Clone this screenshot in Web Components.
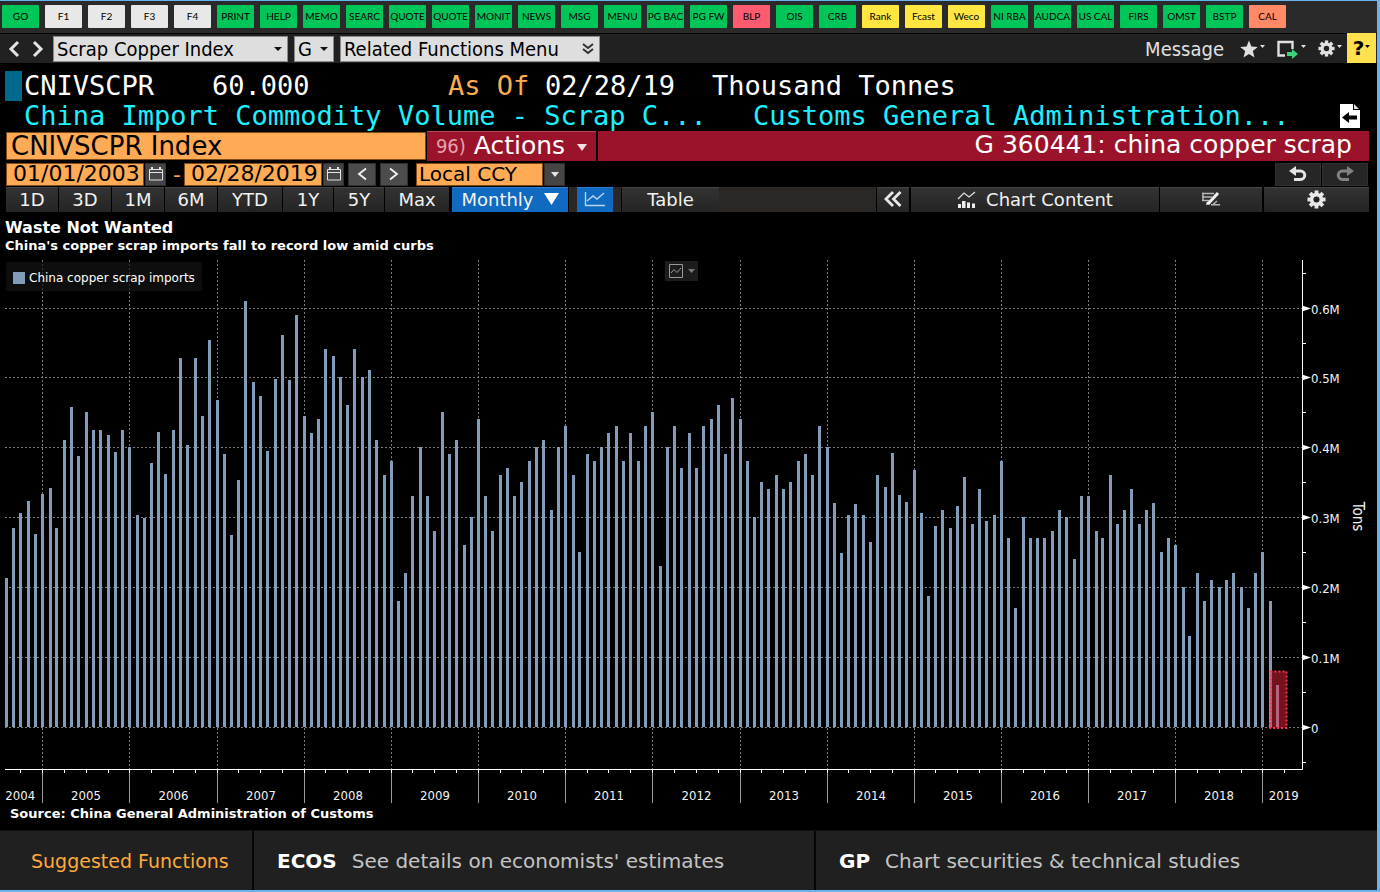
<!DOCTYPE html>
<html lang="en">
<head>
<meta charset="utf-8">
<title>CNIVSCPR Index - Scrap Copper Index</title>
<style>
  html, body { margin: 0; background: #000; }
  body { font-family: "DejaVu Sans", sans-serif; color: #fff; }
</style>
</head>
<body>
<terminal-window>
  <key-strip></key-strip>
  <nav-bar></nav-bar>
  <security-header></security-header>
  <title-bar></title-bar>
  <range-bar></range-bar>
  <chart-tabs></chart-tabs>
  <chart-panel>
    <span slot="title">Waste Not Wanted</span>
    <span slot="subtitle">China's copper scrap imports fall to record low amid curbs</span>
    <bar-chart label="China copper scrap imports" unit="Tons"></bar-chart>
    <span slot="source">Source: China General Administration of Customs</span>
  </chart-panel>
  <suggested-functions></suggested-functions>
</terminal-window>

<script>
const BASE = `
  :host, *, *::before, *::after { box-sizing: border-box; }
  button, input, select { font: inherit; color: inherit; margin: 0; padding: 0; border: 0; border-radius: 0; background: none; appearance: none; min-width: 0; }
  button { cursor: pointer; display: flex; align-items: center; justify-content: center; }
  svg { display: block; flex: none; }
  a { color: inherit; text-decoration: none; }
`;

const GEAR = (s, c) => `<svg width="${s}" height="${s}" viewBox="-10 -10 20 20" aria-hidden="true"><g fill="${c}">${
  [0, 45, 90, 135].map(a => `<rect x="-2" y="-9.5" width="4" height="19" transform="rotate(${a})"/>`).join('')
}</g><circle r="5" fill="none" stroke="${c}" stroke-width="4"/><circle r="3.2" fill="#222"/></svg>`;
const CARET = (w, h, c) => `<svg width="${w}" height="${h}" viewBox="0 0 10 6" preserveAspectRatio="none" aria-hidden="true"><path d="M0 0H10L5 6Z" fill="${c}"/></svg>`;

function define(tag, css, html) {
  const template = document.createElement('template');
  template.innerHTML = `<style>${BASE}${css}</style>${html}`;
  customElements.define(tag, class extends HTMLElement {
    constructor() {
      super();
      this.attachShadow({ mode: 'open' }).append(template.content.cloneNode(true));
    }
  });
}

define('terminal-window', `
  :host { display: flex; flex-direction: column; min-height: 100vh;
    border: solid #68b4ee; border-width: 1px 3px 2px 0; background: #000; }
`, `<slot></slot>`);

/* Programmable key strip */
const KEYS = [
  ['green', 'GO'], ['plain', 'F1 F2 F3 F4'], ['green', 'PRINT HELP MEMO SEARC QUOTE QUOTE MONIT NEWS MSG MENU PG_BAC PG_FW'],
  ['red', 'BLP'], ['green', 'OIS CRB'], ['yellow', 'Rank Fcast Weco'],
  ['green', 'NI_RBA AUDCA US_CAL FIRS OMST BSTP'], ['coral', 'CAL'],
].flatMap(([kind, names]) => names.split(' ').map(n => `<button class="${kind}"><span>${n.replace('_', ' ')}</span></button>`)).join('');

define('key-strip', `
  :host { display: flex; gap: 6px; height: 33px; padding: 4px 2px; background: #2a2a2a; border-bottom: 1px solid #000; overflow: hidden; }
  button { flex: none; width: 37px; height: 23px; border-radius: 1px; color: #000; font: 10px/23px Lato, sans-serif; }
  span { white-space: nowrap; }
  .green { background: #00c65a; } .plain { background: #e8e8e8; } .red { background: #ff5b70; }
  .yellow { background: #ffe640; } .coral { background: #ff8a65; }
`, KEYS);

/* Navigation bar */
define('nav-bar', `
  :host { display: flex; align-items: center; height: 29px; padding-left: 7px; background: #212121;
    font-family: "DejaVu Sans Condensed", "DejaVu Sans", sans-serif; font-size: 20px; color: #e0e0e0; }
  .arrows { display: flex; gap: 10px; width: 46px; }
  .box { position: relative; display: flex; height: 26px; margin-right: 6px; background: #dedede; border: 1px solid #8a8a8a; color: #000; align-items: center; }
  .box svg { position: absolute; right: 5px; pointer-events: none; }
  .box select, .box button { width: 100%; height: 24px; padding-left: 3px; line-height: 24px; justify-content: flex-start; white-space: nowrap; }
  .index { width: 235px; } .kind { width: 40px; } .menu { width: 260px; }
  .tools { display: flex; align-items: center; margin-left: auto; height: 30px; }
  .tools button { gap: 2px; margin-left: 12px; }
  .tools button .c { margin-bottom: 4px; }
  .tools .msg { margin-right: 4px; }
  .tools .help { width: 29px; height: 30px; margin: -1px 1px 0 5px; background: #ffe04d; color: #000; font: bold 20px "DejaVu Sans", sans-serif; gap: 1px; }
`, `
  <div class="arrows">
    <button aria-label="Back"><svg width="14" height="18" viewBox="0 0 14 18"><path d="M11 2L4 9L11 16" fill="none" stroke="#e4e4e4" stroke-width="3"/></svg></button>
    <button aria-label="Forward"><svg width="14" height="18" viewBox="0 0 14 18"><path d="M3 2L10 9L3 16" fill="none" stroke="#e4e4e4" stroke-width="3"/></svg></button>
  </div>
  <div class="box index"><select aria-label="Security"><option>Scrap Copper Index</option></select>${CARET(8, 4, '#111')}</div>
  <div class="box kind"><select aria-label="Function"><option>G</option></select>${CARET(8, 4, '#111')}</div>
  <div class="box menu"><button>Related Functions Menu</button>
    <svg width="12" height="12" viewBox="0 0 12 12"><path d="M1 1L6 5L11 1M1 6L6 10L11 6" fill="none" stroke="#333" stroke-width="2"/></svg></div>
  <div class="tools">
    <button class="msg">Message</button>
    <button aria-label="Favorites"><svg width="18" height="18" viewBox="0 0 18 18"><path d="M9 0.5L11.4 6.6L17.8 7L12.8 11.1L14.5 17.5L9 14L3.5 17.5L5.2 11.1L0.2 7L6.6 6.6Z" fill="#e0e0e0"/></svg><span class="c">${CARET(5, 3, '#e0e0e0')}</span></button>
    <button aria-label="Export"><svg width="22" height="20" viewBox="0 0 22 20"><path d="M8 16.500H1.500V3H15.500V10" fill="none" stroke="#e0e0e0" stroke-width="2.4"/><path d="M10 13H15V10L21 15L15 20V17H10Z" fill="#3fd27c"/></svg><span class="c">${CARET(5, 3, '#e0e0e0')}</span></button>
    <button aria-label="Settings">${GEAR(17, '#e0e0e0')}<span class="c">${CARET(5, 3, '#e0e0e0')}</span></button>
    <button class="help" aria-label="Help">?<span class="c">${CARET(5, 3, '#000')}</span></button>
  </div>
`);

/* Security headline */
define('security-header', `
  :host { display: grid; grid-template-columns: 19px 1fr 37px; padding: 8px 0 0 5px; font: 27px/30px "DejaVu Sans Mono", monospace; white-space: pre; }
  .cursor { width: 17px; height: 30px; background: #006a8c; }
  .row { display: grid; grid-template-columns: 188px 236px 97px 167px auto; }
  .desc { display: grid; grid-template-columns: 729px auto; grid-column: 2; color: #1ff0ff; }
  .row, .desc { justify-content: start; overflow: hidden; }
  .amber { color: #ffae4d; }
  button { grid-column: 3; grid-row: 2; justify-content: flex-start; }
`, `
  <div class="cursor"></div>
  <div class="row"><span>CNIVSCPR</span><span>60.000</span><span class="amber">As Of</span><span>02/28/19</span><span>Thousand Tonnes</span></div>
  <div class="desc"><span>China Import Commodity Volume - Scrap C...</span><span>Customs General Administration...</span></div>
  <button aria-label="Previous page"><svg width="20" height="24" viewBox="0 0 20 24"><path d="M0 0H13V6H20V24H0Z" fill="#fff"/><path d="M14 0L19 5H14Z" fill="#ddd"/><path d="M2 13.5L9 8V11.5H17V15.5H9V19Z" fill="#000"/></svg></button>
`);

/* Title row */
define('title-bar', `
  :host { display: flex; gap: 1px; height: 30px; padding: 0 8px 0 6px; font-size: 25px; }
  input { width: 420px; height: 28px; margin-top: 1px; padding-left: 4px; background: #ffaa55; border: 1px solid #7d4a18; color: #000; font-size: 26px; }
  button { width: 169px; margin-right: 1px; padding-bottom: 2px; background: #9b132b; border-top: 1px solid #b8455a; gap: 8px; }
  button .n { font: 20px "Liberation Sans Narrow", "DejaVu Sans Condensed", sans-serif; color: #e6a3ad; }
  button svg { margin: 4px 0 0 4px; }
  h1 { flex: 1; margin: 0; padding-right: 17px; background: #9b132b; font: inherit; line-height: 28px; text-align: right; white-space: nowrap; }
`, `
  <input type="text" aria-label="Index" value="CNIVSCPR Index">
  <button><span class="n">96)</span><span>Actions</span>${CARET(10, 7, '#f0dfe2')}</button>
  <h1>G 360441: china copper scrap</h1>
`);

/* Date range row */
const CAL = `<svg width="14" height="14" viewBox="0 0 14 14" aria-hidden="true"><path d="M0.5 2.5H13.5V13H0.5ZM0.5 5.5H13.5" fill="none" stroke="#e4e4e4"/><path d="M3 0V3M11 0V3" stroke="#e4e4e4" stroke-width="2"/></svg>`;
define('range-bar', `
  :host { display: flex; align-items: center; height: 26px; padding: 0 9px 0 6px; font-size: 22px; }
  input, select { height: 23px; background: #ffaa55; border: 1px solid #7d4a18; color: #000; }
  input { width: 138px; padding: 0 4px 2px 6px; }
  select { width: 127px; margin-left: 8px; padding: 0 2px; font-size: 20px; line-height: 20px; }
  button { width: 21px; height: 23px; margin-left: 1px; background: #454545; border: 1px solid #303030; }
  .dash { width: 18px; text-align: center; font-size: 22px; color: #ff9a45; padding-left: 4px; }
  .step { width: 28px; margin-left: 4px; background: #4c4c4c; }
  .undo { width: 46px; background: #262626; }
  .first { margin-left: auto; }
`, `
  <input type="text" aria-label="Start date" value="01/01/2003"><button aria-label="Pick start date">${CAL}</button>
  <span class="dash">-</span>
  <input type="text" aria-label="End date" value="02/28/2019"><button aria-label="Pick end date">${CAL}</button>
  <button class="step" aria-label="Earlier"><svg width="10" height="14" viewBox="0 0 10 14"><path d="M9 1.500L2 7L9 12.500" fill="none" stroke="#f4f4f4" stroke-width="1.800"/></svg></button>
  <button class="step" aria-label="Later"><svg width="10" height="14" viewBox="0 0 10 14"><path d="M1 1.500L8 7L1 12.500" fill="none" stroke="#f4f4f4" stroke-width="1.800"/></svg></button>
  <select aria-label="Currency"><option>Local CCY</option></select><button aria-label="Choose currency">${CARET(8, 5, '#e4e4e4')}</button>
  <button class="undo first" aria-label="Undo"><svg width="20" height="16" viewBox="0 0 20 16"><path d="M1 5L8 0V10Z" fill="#e4e4e4"/><path d="M6 5H12.5A4.2 4.2 0 0 1 12.5 13.5H6" fill="none" stroke="#e4e4e4" stroke-width="3"/></svg></button>
  <button class="undo" aria-label="Redo"><svg width="20" height="16" viewBox="0 0 20 16"><path d="M19 5L12 0V10Z" fill="#828282"/><path d="M14 5H7.5A4.2 4.2 0 0 0 7.5 13.5H14" fill="none" stroke="#828282" stroke-width="3"/></svg></button>
`);

/* Period and chart tabs */
define('chart-tabs', `
  :host { display: flex; gap: 1px; height: 26px; padding: 0 8px 0 6px; font-size: 18px; color: #f2f2f2; }
  button { flex: none; width: 52px; height: 25px; padding-bottom: 2px; background: linear-gradient(#333, #242424); border-top: 1px solid #444; }
  .n { width: 50px; } .w { width: 64px; }
  .on { background: #106abf; border-color: #2b7fce; }
  .period { width: 116px; margin-left: 2px; gap: 10px; }
  .rest { flex: 1; display: flex; height: 25px; gap: 8px; padding-left: 8px; background: #2b2724; }
  .line { width: 36px; } .table { width: 98px; border-left: 1px solid #000; }
  .back { width: 32px; } .content { width: 248px; gap: 10px; margin-left: 1px; } .edit { width: 102px; } .gear { width: 105px; margin-left: 1px; }
`, `
  <button>1D</button><button>3D</button><button>1M</button><button>6M</button><button class="w">YTD</button><button class="n">1Y</button><button class="n">5Y</button><button class="w">Max</button>
  <button class="on period"><span>Monthly</span>${CARET(15, 12, '#fff')}</button>
  <div class="rest">
    <button class="on line" aria-label="Line chart"><svg width="22" height="16" viewBox="0 0 22 16"><path d="M1.5 1V14.5H21M3 10L9 5L13 8L20 2" fill="none" stroke="#b9d4ee" stroke-width="1.4"/></svg></button>
    <button class="table">Table</button>
  </div>
  <button class="back" aria-label="Collapse"><svg width="18" height="16" viewBox="0 0 18 16"><path d="M9 1L2 8L9 15M16.500 1L9.500 8L16.500 15" fill="none" stroke="#e8e8e8" stroke-width="2.8"/></svg></button>
  <button class="content"><svg width="19" height="17" viewBox="0 0 19 17"><path d="M1 8L7 2L12 6L18 1" fill="none" stroke="#ddd" stroke-width="1.300"/><path d="M1 17V13H4V17ZM5 17V10H8.500V17ZM10 17V11.500H13V17ZM15 17V12.500H18V17Z" fill="#eee"/></svg><span>Chart Content</span></button>
  <button class="edit" aria-label="Annotate"><svg width="18" height="14" viewBox="0 0 18 14"><path d="M0 1.500H12M0 5H10M0 8.500H8M1 0.500V9" stroke="#b5b5b5" stroke-width="1.500"/><path d="M16 1L6 12" stroke="#f0f0f0" stroke-width="3"/><path d="M4 13L5 9.500L8 12Z" fill="#fff"/><path d="M9 12.700H18M15 9L11 12.500" stroke="#b5b5b5" stroke-width="1.500"/></svg></button>
  <button class="gear" aria-label="Chart settings">${GEAR(19, '#e8e8e8')}</button>
`);

/* Chart panel with headings and source line */
define('chart-panel', `
  :host { display: flex; flex-direction: column; flex: 1; padding: 5px 0 7px; font-weight: bold; font-size: 13px; }
  header { padding-left: 5px; }
  h2 { margin: 0; font-size: 16px; line-height: 20px; }
  p { margin: 0; line-height: 16px; }
  .chart { flex: 1; display: flex; padding-top: 6px; font-weight: normal; }
  footer { padding-left: 10px; line-height: 18px; }
`, `
  <header><h2><slot name="title"></slot></h2><p><slot name="subtitle"></slot></p></header>
  <div class="chart"><slot></slot></div>
  <footer><slot name="source"></slot></footer>
`);

/* Monthly import volumes in thousand tons, July 2004 to February 2019 */
const VOLUMES = [
  213,284,306,324,276,334,
  342,285,410,458,387,451,425,425,418,394,425,400,
  304,299,377,422,362,425,528,404,528,445,554,468,
  391,274,354,609,494,474,395,498,561,496,590,445,
  420,440,540,530,500,460,540,500,510,410,360,380,
  180,220,330,400,330,280,450,390,410,260,300,440,
  330,280,360,370,330,350,380,400,410,310,400,430,
  360,250,390,380,400,420,430,380,420,380,430,450,
  230,400,430,370,420,370,430,440,460,390,470,440,
  380,300,350,340,360,340,350,380,390,360,430,400,
  321,249,304,319,304,264,360,344,392,332,322,367,
  306,188,288,310,285,316,358,291,341,294,304,380,
  270,170,300,270,270,270,280,310,300,240,330,330,
  280,270,360,290,310,340,290,310,320,250,270,260,
  200,130,220,180,210,200,210,220,200,170,220,250,
  180,60,
];
const DAY = 86400000;
const START = Date.UTC(2004, 6, 31);
const SPAN = 5431;
const TOP = 668, BOTTOM = -60;

customElements.define('bar-chart', class extends HTMLElement {
  constructor() {
    super();
    this.attachShadow({ mode: 'open' }).innerHTML = `<style>${BASE}
      :host { display: block; position: relative; flex: 1; min-height: 320px; font-family: "DejaVu Sans Condensed", "DejaVu Sans", sans-serif; font-size: 13px; }
      svg.plot { position: absolute; inset: 0; width: 100%; height: 100%; }
      text { fill: #f4f4f4; }
      .tons { font-size: 15px; }
      .legend { position: absolute; left: 6px; top: 2px; display: flex; align-items: center; gap: 4px; height: 29px; padding: 2px 7px 0; background: #141414b0; border-radius: 2px; font: 12px "DejaVu Sans", sans-serif; }
      .legend i { width: 12px; height: 12px; background: #829cba; }
      .mode { position: absolute; left: 665px; top: 1px; width: 33px; height: 20px; gap: 5px; background: #1c1c1c; }
    </style>
    <svg class="plot" role="img"></svg>
    <div class="legend"><i></i><span></span></div>
    <button class="mode" aria-label="Series style"><svg width="14" height="14" viewBox="0 0 14 14"><path d="M0.500 0.500H13.500V13.500H0.500ZM2 9L5 5.500L8 8.500L12 4" fill="none" stroke="#999"/></svg>${CARET(7, 4, '#777')}</button>`;
  }
  connectedCallback() {
    this.shadowRoot.querySelector('.legend span').textContent = this.getAttribute('label');
    this.shadowRoot.querySelector('.plot').setAttribute('aria-label', this.getAttribute('label'));
    this.draw();
    new ResizeObserver(() => this.draw()).observe(this);
  }
  draw() {
    const W = this.clientWidth, H = this.clientHeight;
    if (!W || !H) return;
    const right = W - 75, base = H - 36;
    const x = t => Math.floor(6.35 + (t - START) / DAY * (right - 6) / SPAN);
    const y = v => Math.round((TOP - v) * base / (TOP - BOTTOM));
    const grid = [], bars = [], axis = [];
    const dash = 'stroke="#7c7c7c" stroke-dasharray="2 2"';
    for (let v = 0; v <= 600; v += 100) {
      const gy = y(v) + 0.5;
      grid.push(`<path d="M5 ${gy}H${right}" ${dash}/>`);
      axis.push(`<path d="M${right} ${gy - 3}L${right + 9} ${gy}L${right} ${gy + 3}Z" fill="#fff"/>`,
        `<text x="${right + 9}" y="${gy + 5}">${v ? '0.' + v / 100 + 'M' : '0'}</text>`);
    }
    for (let v = -50; v <= 650; v += 100) axis.push(`<path d="M${right} ${y(v) + 0.5}h4" stroke="#fff"/>`);
    for (let year = 2004; year <= 2019; year++) {
      const end = x(Date.UTC(year, 11, 31)) + 0.5;
      const begin = x(Date.UTC(year - 1, 11, 31)) + 0.5;
      if (year < 2019) {
        grid.push(`<path d="M${end} 0V${base}" ${dash}/>`);
        axis.push(`<path d="M${end} ${base}V${H - 2}" stroke="#9a9a9a"/>`);
      }
      const mid = (Math.max(begin, -2) + Math.min(end, right + 3)) / 2;
      axis.push(`<text x="${mid}" y="${base + 31}" text-anchor="middle">${year}</text>`);
      for (const m of [3, 6, 9, 12]) {
        const qx = x(Date.UTC(year, m, 0)) + 0.5;
        if (qx > 6 && qx < right) axis.push(`<path d="M${qx} ${base}v4" stroke="#fff"/>`);
      }
    }
    VOLUMES.forEach((v, i) => {
      const bx = x(Date.UTC(2004, 7 + i, 0)) - 1;
      bars.push(`<rect x="${bx}" y="${y(v)}" width="3" height="${y(0) - y(v)}"/>`);
    });
    const hx = x(Date.UTC(2019, 0, 31)) + 0.5, hy = y(80) + 0.5;
    this.shadowRoot.querySelector('.plot').innerHTML = `
      ${grid.join('')}<g fill="#829cba">${bars.join('')}</g>
      <rect x="${hx}" y="${hy}" width="16" height="${y(0) - hy + 1}" fill="#f5243a" fill-opacity="0.48"/>
      <rect x="${hx}" y="${hy}" width="16" height="${y(0) - hy + 1}" fill="none" stroke="#fb3350" stroke-width="2" stroke-dasharray="2 2"/>
      <path d="M5 ${base + 0.5}H${right + 0.5}V0" fill="none" stroke="#fff"/>${axis.join('')}
      <text class="tons" text-anchor="middle" transform="translate(${W - 24} ${base / 2 + 2}) rotate(90)">${this.getAttribute('unit')}</text>`;
  }
});

/* Suggested functions */
define('suggested-functions', `
  :host { display: grid; grid-template-columns: 252px 560px 1fr; gap: 2px; min-height: 60px; background: #050505; font-size: 20px; color: #c4c4c4; border-top: 1px solid #111; }
  h3, a { display: flex; align-items: center; gap: 15px; margin: 0; padding-left: 23px; background: #202020; white-space: nowrap; }
  h3 { padding-left: 31px; font: inherit; font-size: 19px; color: #ffaa3c; }
  b { color: #fff; }
`, `
  <h3>Suggested Functions</h3>
  <a href="#ecos"><b>ECOS</b><span>See details on economists' estimates</span></a>
  <a href="#gp"><b>GP</b><span>Chart securities &amp; technical studies</span></a>
`);
</script>
</body>
</html>
